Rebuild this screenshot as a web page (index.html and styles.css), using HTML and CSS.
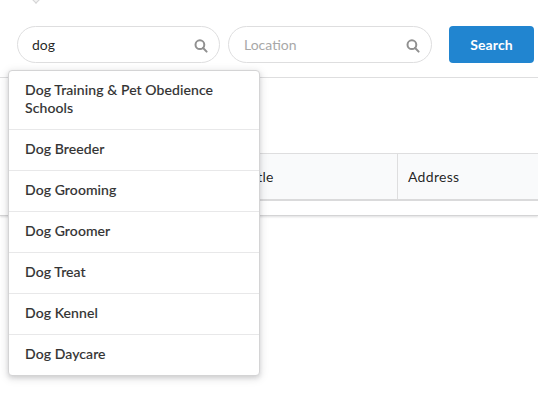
FILE: index.html
```html
<!DOCTYPE html>
<html lang="en">
<head>
<meta charset="utf-8">
<title>Search</title>
<link rel="stylesheet" href="styles.css">
</head>
<body>
<div class="panel">
  <div class="search-bar">
    <span class="pointer"></span>
    <div class="field field-what">
      <input class="input" type="text" value="dog">
      <svg class="icon" viewBox="0 0 14 14"><circle cx="5.9" cy="5.7" r="4.4"/><path d="M9.1 9l3.5 3.6"/></svg>
      <div class="menu">
        <div class="item">Dog Training &amp; Pet Obedience Schools</div>
        <div class="item">Dog Breeder</div>
        <div class="item">Dog Grooming</div>
        <div class="item">Dog Groomer</div>
        <div class="item">Dog Treat</div>
        <div class="item">Dog Kennel</div>
        <div class="item">Dog Daycare</div>
      </div>
    </div>
    <div class="field field-where">
      <input class="input" type="text" placeholder="Location">
      <svg class="icon" viewBox="0 0 14 14"><circle cx="5.9" cy="5.7" r="4.4"/><path d="M9.1 9l3.5 3.6"/></svg>
    </div>
    <button class="button">Search</button>
  </div>
  <div class="results">
    <div class="cell cell-title">Title</div>
    <div class="cell cell-address">Address</div>
  </div>
</div>
</body>
</html>
```
FILE: styles.css
```css
* { box-sizing: border-box; }
body {
  margin: 0;
  min-height: 407px;
  background: #fff;
  color: rgba(0, 0, 0, .87);
  font: 14px/18px Lato, sans-serif;
}
.panel {
  height: 216px;
  border-bottom: 1px solid #d4d4d5;
  box-shadow: 0 1px 2px rgba(34, 36, 38, .15);
}
.search-bar {
  position: relative;
  display: flex;
  height: 78px;
  padding: 26px 4px 0 17px;
  border-bottom: 1px solid #dededf;
}
.pointer {
  position: absolute;
  top: -6px;
  left: 32px;
  width: 8px;
  height: 8px;
  background: #f3f3f3;
  border: solid #d4d4d5;
  border-width: 0 1px 1px 0;
  transform: rotate(45deg);
}
.field { position: relative; height: 37px; }
.field-what { width: 203px; margin-right: 8px; }
.field-where { width: 204px; margin-right: 17px; }
.input {
  display: block;
  width: 100%;
  height: 37px;
  padding: 0 36px 1px 14px;
  border: 1px solid #dededf;
  border-radius: 19px;
  outline: 0;
  background: #fff;
  color: rgba(0, 0, 0, .87);
  font: 14px Lato, sans-serif;
}
.input::placeholder { color: #a8a8a8; opacity: 1; }
.field-where .input { padding-left: 15px; }
.icon {
  position: absolute;
  top: 13px;
  right: 12px;
  width: 14px;
  height: 14px;
  fill: none;
  stroke: #909090;
  stroke-width: 2;
  stroke-linecap: round;
}
.button {
  width: 85px;
  height: 37px;
  padding: 0 0 1px;
  border: 0;
  border-radius: 4px;
  background: #2185d0;
  color: #fff;
  font: 700 14px Lato, sans-serif;
  letter-spacing: .1px;
}
.menu {
  position: absolute;
  z-index: 2;
  top: 44px;
  left: -9px;
  width: 252px;
  border: 1px solid #d4d4d5;
  border-radius: 4px;
  background: #fff;
  box-shadow: 0 2px 4px rgba(34, 36, 38, .12), 0 2px 10px rgba(34, 36, 38, .15);
}
.item {
  padding: 10px 16px 12px;
  border-bottom: 1px solid #e8e8e9;
  color: #333;
  font-weight: 500;
  letter-spacing: .09px;
  -webkit-text-stroke: .12px #333;
}
.item:last-child { border-bottom: 0; }
.results {
  display: grid;
  grid-template-columns: 162px 1fr;
  height: 48px;
  margin: 75px 0 0 236px;
  border-top: 1px solid #dededf;
  border-bottom: 2px solid #dadadb;
  background: #f9fafb;
}
.cell { padding: 14px 10px 0; letter-spacing: .3px; }
.cell-title { border-right: 1px solid #dededf; padding-left: 9px; }
```
